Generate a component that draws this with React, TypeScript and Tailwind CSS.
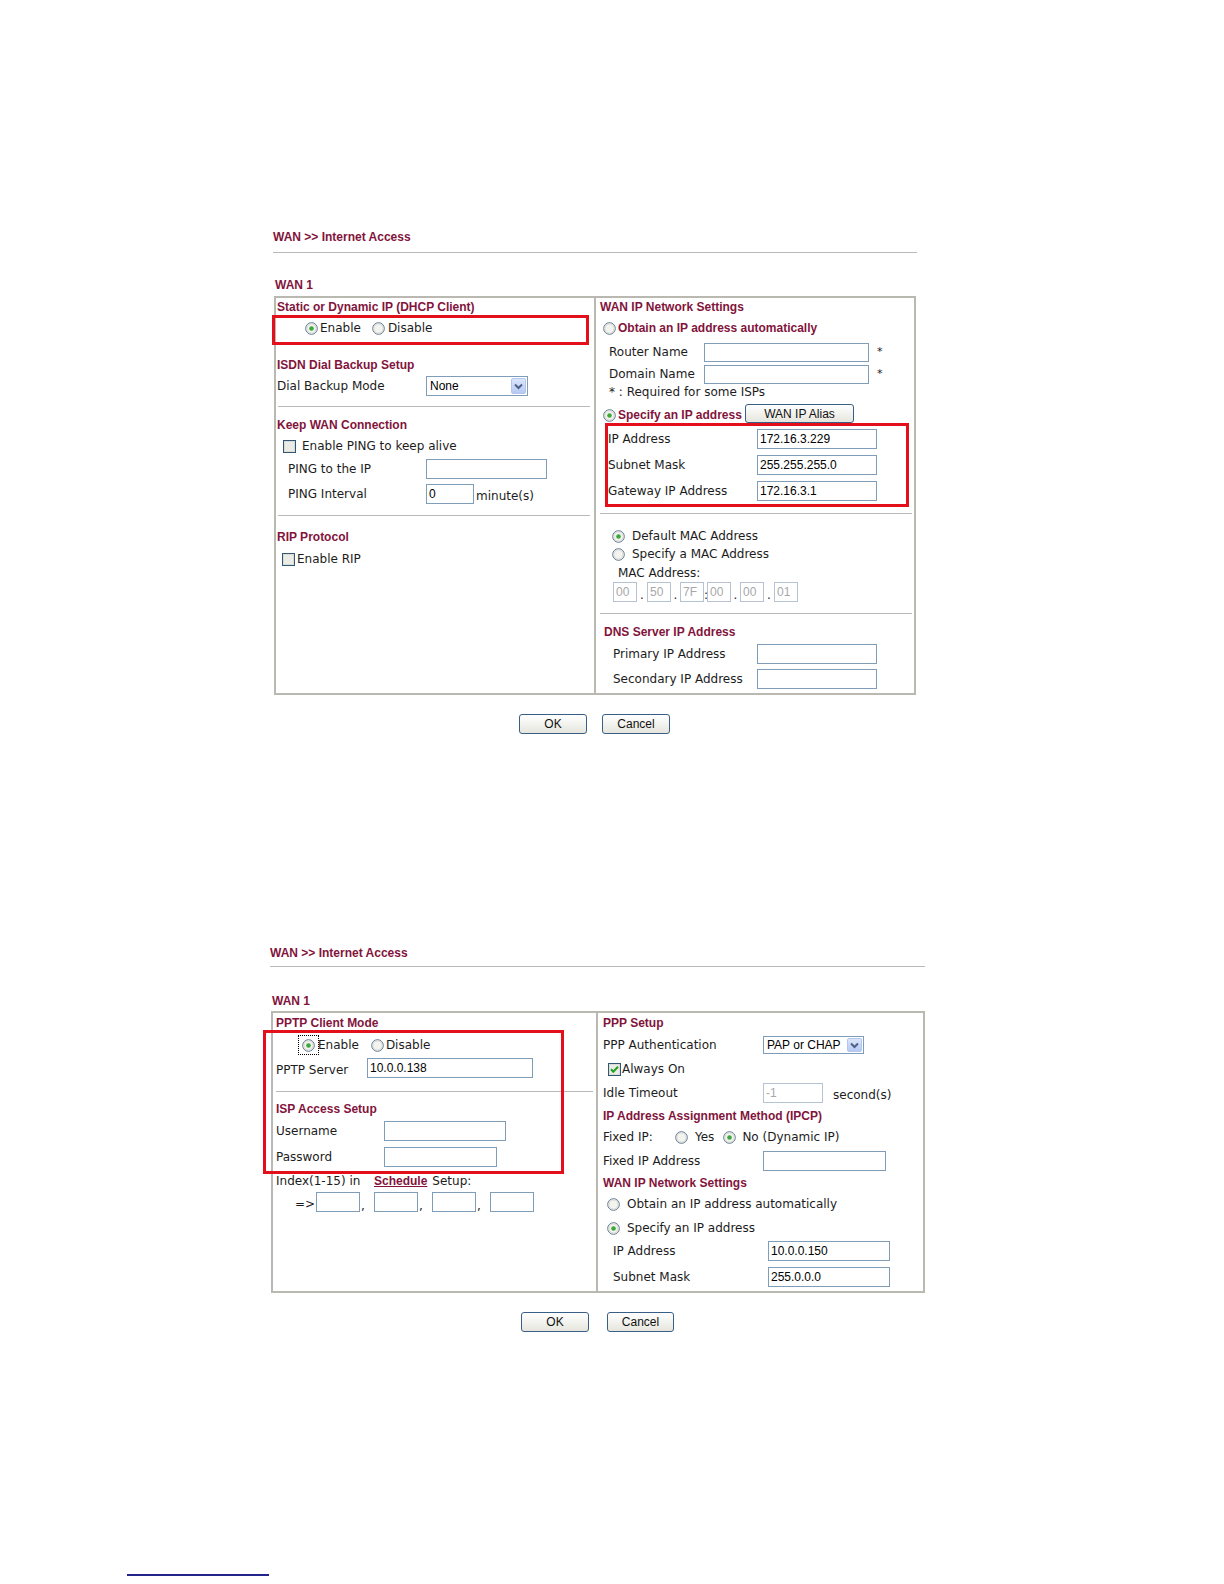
import React from "react";

const H = "font-['Liberation_Sans',Arial,sans-serif] font-bold text-[12px] text-[#82143c] leading-none";
const IF = "font-['Liberation_Sans',Arial,sans-serif] text-[12px] leading-none";

function Radio({ checked = false }: { checked?: boolean }) {
  return (
    <svg width="13" height="13" viewBox="0 0 13 13" className="shrink-0">
      <circle cx="6.5" cy="6.5" r="5.8" fill="#f3f3ef" stroke="#5b7590" strokeWidth="1" />
      <circle cx="6.5" cy="6.5" r="4.6" fill="none" stroke="#dadad2" strokeWidth="1" />
      {checked && <circle cx="6.5" cy="6.5" r="2.3" fill="#3aa83a" />}
    </svg>
  );
}

function Check({ checked = false }: { checked?: boolean }) {
  return (
    <svg width="13" height="13" viewBox="0 0 13 13" className="shrink-0">
      <rect x="0.5" y="0.5" width="12" height="12" fill="#ecece6" stroke="#2f5777" strokeWidth="1" />
      <rect x="1.5" y="1.5" width="10" height="10" fill="none" stroke="#dcdcd4" strokeWidth="1" />
      {checked && <path d="M3 6.3 L5.3 8.8 L10 3.8" fill="none" stroke="#21a121" strokeWidth="2" />}
    </svg>
  );
}

function Input({ w, h = 20, value = "", grey = false }: { w: number; h?: number; value?: string; grey?: boolean }) {
  return (
    <div
      className={`shrink-0 border bg-white flex items-center px-[2px] ${IF} ${grey ? "border-[#b5c3d2] text-[#a8a8a8]" : "border-[#7f9db9] text-black"}`}
      style={{ width: w, height: h }}
    >
      {value}
    </div>
  );
}

function Select({ w, h, value }: { w: number; h: number; value: string }) {
  return (
    <div className={`shrink-0 border border-[#7f9db9] bg-white flex items-center ${IF}`} style={{ width: w, height: h }}>
      <span className="flex-1 pl-[3px] text-black">{value}</span>
      <div className="w-[15px] h-[calc(100%-2px)] mr-[1px] rounded-[2px] bg-linear-to-b from-[#dce6fb] to-[#b6c9f3] border border-[#b4c6ee] flex items-center justify-center">
        <svg width="9" height="7" viewBox="0 0 9 7">
          <path d="M1 1.5 L4.5 5 L8 1.5" fill="none" stroke="#4d6185" strokeWidth="2" />
        </svg>
      </div>
    </div>
  );
}

function Button({ w, h = 20, label }: { w: number; h?: number; label: string }) {
  return (
    <div
      className={`shrink-0 rounded-[3px] border border-[#3a5f86] bg-linear-to-b from-white to-[#e6e6de] flex items-center justify-center text-[#111] ${IF}`}
      style={{ width: w, height: h }}
    >
      {label}
    </div>
  );
}

function Figure1() {
  return (
    <div className="relative ml-[273px] mt-[228px] w-[644px] flex flex-col">
      <div className={`h-[18px] flex items-center ${H}`}>WAN &gt;&gt; Internet Access</div>
      <div className="mt-[6px] h-px bg-[#b9b9b9]" />
      <div className={`mt-[23px] h-[18px] pl-[2px] flex items-center ${H}`}>WAN 1</div>
      <div className="mt-[2px] ml-[1px] w-[642px] h-[399px] border-2 border-[#b9b9b1] flex">
        {/* left column */}
        <div className="w-[320px] border-r-2 border-[#b9b9b1] flex flex-col">
          <div className={`h-[18px] pl-[1px] flex items-center ${H}`}>Static or Dynamic IP (DHCP Client)</div>
          <div className="mt-[2px] h-[20px] pl-[29px] flex items-center">
            <Radio checked />
            <span className="ml-[2px]">Enable</span>
            <span className="ml-[11px]"><Radio /></span>
            <span className="ml-[3px]">Disable</span>
          </div>
          <div className={`mt-[18px] h-[18px] pl-[1px] flex items-center ${H}`}>ISDN Dial Backup Setup</div>
          <div className="mt-[2px] h-[20px] pl-[1px] flex items-center">
            <span className="w-[149px]">Dial Backup Mode</span>
            <Select w={102} h={20} value="None" />
          </div>
          <div className="mt-[10px] ml-[2px] w-[312px] h-px bg-[#b9b9b9]" />
          <div className={`mt-[9px] h-[18px] pl-[1px] flex items-center ${H}`}>Keep WAN Connection</div>
          <div className="mt-[2px] h-[20px] pl-[7px] flex items-center">
            <Check />
            <span className="ml-[6px]">Enable PING to keep alive</span>
          </div>
          <div className="mt-[3px] h-[20px] pl-[12px] flex items-center">
            <span className="w-[138px]">PING to the IP</span>
            <Input w={121} />
          </div>
          <div className="mt-[5px] h-[20px] pl-[12px] flex items-center">
            <span className="w-[138px]">PING Interval</span>
            <Input w={48} value="0" />
            <span className="mt-[3px] ml-[2px]">minute(s)</span>
          </div>
          <div className="mt-[11px] ml-[2px] w-[312px] h-px bg-[#b9b9b9]" />
          <div className={`mt-[12px] h-[18px] pl-[1px] flex items-center ${H}`}>RIP Protocol</div>
          <div className="mt-[3px] h-[20px] pl-[6px] flex items-center">
            <Check />
            <span className="ml-[2px]">Enable RIP</span>
          </div>
        </div>
        {/* right column */}
        <div className="flex-1 flex flex-col">
          <div className={`h-[18px] pl-[4px] flex items-center ${H}`}>WAN IP Network Settings</div>
          <div className="mt-[2px] h-[20px] pl-[7px] flex items-center">
            <Radio />
            <span className={`ml-[2px] ${H}`}>Obtain an IP address automatically</span>
          </div>
          <div className="mt-[4px] h-[20px] pl-[13px] flex items-center">
            <span className="w-[95px]">Router Name</span>
            <Input w={165} h={19} />
            <span className="ml-[8px] text-[11px]">*</span>
          </div>
          <div className="mt-[2px] h-[20px] pl-[13px] flex items-center">
            <span className="w-[95px]">Domain Name</span>
            <Input w={165} h={19} />
            <span className="ml-[8px] text-[11px]">*</span>
          </div>
          <div className="h-[16px] pl-[13px] flex items-center">* : Required for some ISPs</div>
          <div className="mt-[3px] h-[20px] pl-[7px] flex items-end">
            <div className="h-[16px] flex items-center">
              <Radio checked />
              <span className={`ml-[2px] w-[127px] ${H}`}>Specify an IP address</span>
            </div>
            <Button w={109} h={19} label="WAN IP Alias" />
          </div>
          <div className="mt-[6px] h-[20px] pl-[12px] flex items-center">
            <span className="w-[149px]">IP Address</span>
            <Input w={120} value="172.16.3.229" />
          </div>
          <div className="mt-[6px] h-[20px] pl-[12px] flex items-center">
            <span className="w-[149px]">Subnet Mask</span>
            <Input w={120} value="255.255.255.0" />
          </div>
          <div className="mt-[6px] h-[20px] pl-[12px] flex items-center">
            <span className="w-[149px]">Gateway IP Address</span>
            <Input w={120} value="172.16.3.1" />
          </div>
          <div className="mt-[12px] ml-[4px] w-[312px] h-px bg-[#b9b9b9]" />
          <div className="mt-[13px] h-[18px] pl-[16px] flex items-center">
            <Radio checked />
            <span className="ml-[7px]">Default MAC Address</span>
          </div>
          <div className="h-[18px] pl-[16px] flex items-center">
            <Radio />
            <span className="ml-[7px]">Specify a MAC Address</span>
          </div>
          <div className="mt-[2px] h-[16px] pl-[22px] flex items-center">MAC Address:</div>
          <div className="mt-[1px] h-[20px] pl-[17px] flex items-end">
            <Input w={24} value="00" grey />
            <span className="w-[10px] text-center leading-[14px]">.</span>
            <Input w={24} value="50" grey />
            <span className="w-[9px] text-center leading-[14px]">.</span>
            <Input w={24} value="7F" grey />
            <span className="w-[3px] text-center leading-[14px]">:</span>
            <Input w={24} value="00" grey />
            <span className="w-[9px] text-center leading-[14px]">.</span>
            <Input w={24} value="00" grey />
            <span className="w-[10px] text-center leading-[14px]">.</span>
            <Input w={24} value="01" grey />
          </div>
          <div className="mt-[11px] ml-[4px] w-[312px] h-px bg-[#b9b9b9]" />
          <div className={`mt-[9px] h-[18px] pl-[8px] flex items-center ${H}`}>DNS Server IP Address</div>
          <div className="mt-[3px] h-[20px] pl-[17px] flex items-center">
            <span className="w-[144px]">Primary IP Address</span>
            <Input w={120} />
          </div>
          <div className="mt-[5px] h-[20px] pl-[17px] flex items-center">
            <span className="w-[144px]">Secondary IP Address</span>
            <Input w={120} />
          </div>
        </div>
      </div>
      <div className="mt-[19px] ml-[246px] flex gap-[15px]">
        <Button w={68} label="OK" />
        <Button w={68} label="Cancel" />
      </div>
      {/* highlight boxes */}
      <div className="absolute left-[-1px] top-[87px] w-[317px] h-[30px] border-[3px] border-[#e3101c]" />
      <div className="absolute left-[332px] top-[195px] w-[304px] h-[84px] border-[3px] border-[#e3101c]" />
    </div>
  );
}

function Figure2() {
  return (
    <div className="relative ml-[270px] mt-[210px] w-[655px] flex flex-col">
      <div className={`h-[18px] flex items-center ${H}`}>WAN &gt;&gt; Internet Access</div>
      <div className="mt-[4px] h-px bg-[#b9b9b9]" />
      <div className={`mt-[25px] h-[18px] pl-[2px] flex items-center ${H}`}>WAN 1</div>
      <div className="mt-[1px] ml-[1px] w-[654px] h-[282px] border-2 border-[#b9b9b1] flex">
        {/* left */}
        <div className="w-[325px] border-r-2 border-[#b9b9b1] flex flex-col">
          <div className={`mt-[1px] h-[18px] pl-[3px] flex items-center ${H}`}>PPTP Client Mode</div>
          <div className="mt-[2px] h-[22px] pl-[25px] flex items-center">
            <div className="w-[21px] h-[20px] border border-dotted border-black flex items-center justify-center">
              <Radio checked />
            </div>
            <span className="ml-[-1px]">Enable</span>
            <span className="ml-[12px]"><Radio /></span>
            <span className="ml-[2px]">Disable</span>
          </div>
          <div className="mt-[2px] h-[20px] pl-[3px] flex items-center">
            <span className="w-[91px] mt-[3px]">PPTP Server</span>
            <Input w={166} value="10.0.0.138" />
          </div>
          <div className="mt-[13px] ml-[3px] w-[317px] h-px bg-[#b9b9b9]" />
          <div className={`mt-[8px] h-[18px] pl-[3px] flex items-center ${H}`}>ISP Access Setup</div>
          <div className="mt-[3px] h-[20px] pl-[3px] flex items-center">
            <span className="w-[108px]">Username</span>
            <Input w={122} />
          </div>
          <div className="mt-[6px] h-[20px] pl-[3px] flex items-center">
            <span className="w-[108px]">Password</span>
            <Input w={113} />
          </div>
          <div className="mt-[5px] h-[18px] pl-[3px] flex items-center">
            <span className="w-[98px]">Index(1-15) in</span>
            <span className={`${H} underline`}>Schedule</span>
            <span className="ml-[5px]">Setup:</span>
          </div>
          <div className="mt-[2px] h-[20px] pl-[22px] flex items-end">
            <span className="w-[21px] leading-[16px]">=&gt;</span>
            <Input w={44} />
            <span className="w-[14px] pl-[1px] leading-[12px]">,</span>
            <Input w={44} />
            <span className="w-[14px] pl-[1px] leading-[12px]">,</span>
            <Input w={44} />
            <span className="w-[14px] pl-[1px] leading-[12px]">,</span>
            <Input w={44} />
          </div>
        </div>
        {/* right */}
        <div className="flex-1 flex flex-col">
          <div className={`mt-[1px] h-[18px] pl-[5px] flex items-center ${H}`}>PPP Setup</div>
          <div className="mt-[4px] h-[18px] pl-[5px] flex items-center">
            <span className="w-[160px]">PPP Authentication</span>
            <Select w={101} h={18} value="PAP or CHAP" />
          </div>
          <div className="mt-[5px] h-[20px] pl-[10px] flex items-center">
            <Check checked />
            <span className="ml-[1px]">Always On</span>
          </div>
          <div className="mt-[4px] h-[20px] pl-[5px] flex items-center">
            <span className="w-[160px]">Idle Timeout</span>
            <Input w={60} value="-1" grey />
            <span className="ml-[10px] mt-[4px]">second(s)</span>
          </div>
          <div className={`mt-[4px] h-[18px] pl-[5px] flex items-center ${H}`}>IP Address Assignment Method (IPCP)</div>
          <div className="mt-[2px] h-[20px] pl-[5px] flex items-center">
            <span className="w-[72px]">Fixed IP:</span>
            <Radio />
            <span className="ml-[7px]">Yes</span>
            <span className="ml-[9px]"><Radio checked /></span>
            <span className="ml-[6px]">No (Dynamic IP)</span>
          </div>
          <div className="mt-[4px] h-[20px] pl-[5px] flex items-center">
            <span className="w-[160px]">Fixed IP Address</span>
            <Input w={123} />
          </div>
          <div className={`mt-[3px] h-[18px] pl-[5px] flex items-center ${H}`}>WAN IP Network Settings</div>
          <div className="mt-[2px] h-[20px] pl-[9px] flex items-center">
            <Radio />
            <span className="ml-[7px]">Obtain an IP address automatically</span>
          </div>
          <div className="mt-[4px] h-[20px] pl-[9px] flex items-center">
            <Radio checked />
            <span className="ml-[7px]">Specify an IP address</span>
          </div>
          <div className="mt-[3px] h-[20px] pl-[15px] flex items-center">
            <span className="w-[155px]">IP Address</span>
            <Input w={122} value="10.0.0.150" />
          </div>
          <div className="mt-[6px] h-[20px] pl-[15px] flex items-center">
            <span className="w-[155px]">Subnet Mask</span>
            <Input w={122} value="255.0.0.0" />
          </div>
        </div>
      </div>
      <div className="mt-[19px] ml-[251px] flex gap-[18px]">
        <Button w={68} label="OK" />
        <Button w={67} label="Cancel" />
      </div>
      <div className="absolute left-[-7px] top-[86px] w-[301px] h-[144px] border-[3px] border-[#e3101c]" />
    </div>
  );
}

export default function App() {
  return (
    <div className="w-[1224px] h-[1584px] bg-white flex flex-col font-['DejaVu_Sans',Verdana,sans-serif] text-[12px] text-[#1c1c1c] overflow-hidden">
      <Figure1 />
      <Figure2 />
      <div className="mt-[242px] ml-[127px] w-[142px] h-[2px] bg-[#23238c]" />
    </div>
  );
}
